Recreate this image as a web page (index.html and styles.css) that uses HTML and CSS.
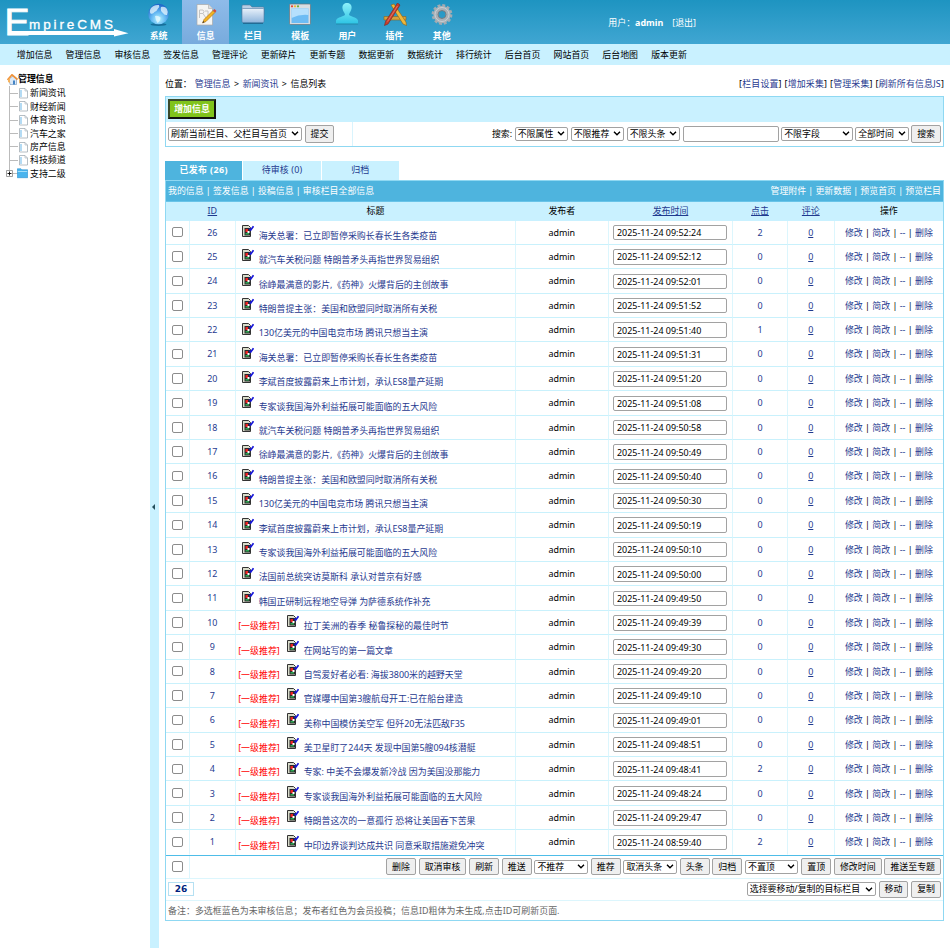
FILE: index.html
```html
<!DOCTYPE html>
<html lang="zh-CN">
<head>
  <meta charset="UTF-8">
  <title>EmpireCMS</title>
  <link rel="stylesheet" href="styles.css">
</head>

<body>
  <header class="top">
    <svg class="logo" width="135" height="44" viewBox="0 0 135 44">
      <text x="4.500" y="35" class="logo-e">E</text>
      <text x="29" y="29" class="logo-text" textLength="84">mpireCMS</text>
      <path d="M8 31H114V29L128.500 33.200L114 36.500V35H8Z" fill="#fff"/>
    </svg>
    <nav class="menu">
      <a>
        <svg width="24" height="24" viewBox="0 0 24 24">
          <defs>
            <radialGradient id="ball" cx=".5" cy=".75" r=".7"><stop offset="0" stop-color="#b5f4ff"/><stop offset=".5" stop-color="#62b6f2"/><stop offset="1" stop-color="#1f68ca"/></radialGradient>
            <linearGradient id="fold" x2="0" y2="1"><stop offset="0" stop-color="#e8f1fa"/><stop offset="1" stop-color="#8fb5dc"/></linearGradient>
            <linearGradient id="man" x2="0" y2="1"><stop offset="0" stop-color="#8df0fa"/><stop offset="1" stop-color="#2cc4e4"/></linearGradient>
          </defs>
          <ellipse cx="11.500" cy="21.500" rx="8" ry="1.500" fill="#176f9b"/>
          <circle cx="11.500" cy="11" r="10.300" fill="url(#ball)"/>
          <path d="M4 5Q7 1.500 12 2Q13 4 11 5.500Q10 8 7.500 9Q6 11.500 3.500 10.500Q2 8 4 5ZM14 4Q18 3 20 6Q21.500 9 20 12Q17 12.500 16 10Q13 8 14 4ZM8 13Q11 12 13.500 14.500Q13.500 18 10.500 20Q8.500 17 8 13Z" fill="#eafaff" opacity=".75"/>
        </svg>
        <b>系统</b>
      </a>
      <a class="on">
        <svg width="24" height="24" viewBox="0 0 24 24">
          <path d="M3 1.500H14.500L18.500 5.500V22H3Z" fill="#f5f5f3" stroke="#a9a9a9" stroke-width=".7"/>
          <path d="M14.500 1.500V5.500H18.500" fill="#ddd" stroke="#aaa" stroke-width=".6"/>
          <path d="M5.500 7H9Q11 8.500 9 10.500H5.500ZM5.500 7V15M9 10.500L12 15M11 8H14V14" fill="none" stroke="#c4c4c4"/>
          <path d="M8.500 20L10 16.500 19 7.500 21 9.500 12 18.500Z" fill="#f3b321" stroke="#a66c11" stroke-width=".6"/>
          <path d="M19 7.500L20.500 6 22.500 8 21 9.500Z" fill="#d4493a"/>
          <path d="M8.500 20L9.300 18 10.500 19.200Z" fill="#333"/>
        </svg>
        <b>信息</b>
      </a>
      <a>
        <svg width="24" height="24" viewBox="0 0 24 24">
          <path d="M1 3Q1 2 2 2H9L11 4H22Q23 4 23 5V12H1Z" fill="#b9cfe5" stroke="#59799a" stroke-width=".6"/>
          <rect x="1" y="5.500" width="22" height="14" rx="1" fill="url(#fold)" stroke="#527aa2" stroke-width=".6"/>
          <path d="M2 20.500H22" stroke="#216c95"/>
        </svg>
        <b>栏目</b>
      </a>
      <a>
        <svg width="24" height="24" viewBox="0 0 24 24">
          <rect x="1.500" y="1" width="21" height="20.500" rx="1" fill="#d8dde2" stroke="#68747d" stroke-width=".7"/>
          <circle cx="4" cy="3.300" r="1.100" fill="#e34430"/><circle cx="7" cy="3.300" r="1.100" fill="#f0b72b"/><circle cx="10" cy="3.300" r="1.100" fill="#67ad35"/>
          <rect x="3.500" y="5.500" width="17" height="14.500" fill="#6dbcf4"/>
          <path d="M3.500 5.500H20.500V12Q12 11 3.500 15Z" fill="#b5e0fd"/>
        </svg>
        <b>模板</b>
      </a>
      <a>
        <svg width="24" height="24" viewBox="0 0 24 24">
          <path d="M12 0C15.500 0 17 2.500 16.500 5.500C16.200 8 14.500 9.500 14 11.500C14 13.500 22 14 23 17.500V21H1V17.500C2 14 10 13.500 10 11.500C9.500 9.500 7.800 8 7.500 5.500C7 2.500 8.500 0 12 0Z" fill="url(#man)"/>
          <path d="M1 21H23" stroke="#2389aa"/>
        </svg>
        <b>用户</b>
      </a>
      <a>
        <svg width="24" height="24" viewBox="0 0 24 24">
          <path d="M1 13.500H23V17H1Z" fill="#d6a13c" stroke="#8d6420" stroke-width=".6"/>
          <path d="M8 2L11 1 23 19 23.500 22.500 20 21Z" fill="#efb73a" stroke="#8c6217" stroke-width=".6"/>
          <path d="M14.500 0L17 2 5 21 1.500 22.500 2.500 18.500Z" fill="#c93e2c" stroke="#7d2319" stroke-width=".6"/>
          <path d="M14.500 3L4.500 18.500" stroke="#ed8c78" stroke-width=".7"/>
        </svg>
        <b>插件</b>
      </a>
      <a>
        <svg width="24" height="24" viewBox="0 0 24 24">
          <circle cx="12" cy="11.500" r="9" fill="none" stroke="#a3abb2" stroke-width="2.800" stroke-dasharray="2.850 1.862"/>
          <circle cx="12" cy="11.500" r="6.200" fill="none" stroke="#a8b0b6" stroke-width="5"/>
          <circle cx="12" cy="11.500" r="4" fill="none" stroke="#737c83" stroke-width="1"/>
          <circle cx="12" cy="11.500" r="7" fill="none" stroke="#c9cfd4" stroke-width="1"/>
        </svg>
        <b>其他</b>
      </a>
    </nav>
    <div class="user">用户：<b>admin</b><span>[退出]</span></div>
  </header>

  <nav class="submenu">
    <a>增加信息</a><a>管理信息</a><a>审核信息</a><a>签发信息</a><a>管理评论</a><a>更新碎片</a><a>更新专题</a><a>数据更新</a><a>数据统计</a><a>排行统计</a><a>后台首页</a><a>网站首页</a><a>后台地图</a><a>版本更新</a>
  </nav>

  <div class="page">
    <aside class="side">
      <div class="root">
        <svg width="11" height="11" viewBox="0 0 11 11"><path d="M2 5L6 2 9.500 5V10.500H3Z" fill="#dbe9f7" stroke="#6f94bd" stroke-width=".6"/><path d="M.5 6L5 .8 10.500 5.500" fill="none" stroke="#f0923a" stroke-width="1.700"/><path d="M1 5.500L3 3.500V9L1 8Z" fill="#f6b25c"/><path d="M6 6.500H8V10.500H6Z" fill="#4384c6"/></svg>
        管理信息
      </div>
      <ul class="tree">
        <li><svg class="file"><use href="#file"/></svg>新闻资讯</li>
        <li><svg class="file"><use href="#file"/></svg>财经新闻</li>
        <li><svg class="file"><use href="#file"/></svg>体育资讯</li>
        <li><svg class="file"><use href="#file"/></svg>汽车之家</li>
        <li><svg class="file"><use href="#file"/></svg>房产信息</li>
        <li><svg class="file"><use href="#file"/></svg>科技频道</li>
        <li class="more">
          <svg class="plus" width="7" height="7" viewBox="0 0 7 7"><path d="M.5.5H6.500V6.500H.5Z" fill="#fff" stroke="#888" stroke-width=".8"/><path d="M1.500 3.500H5.500M3.500 1.500V5.500" stroke="#000" stroke-width=".9"/></svg>
          <svg class="file" viewBox="0 0 11 11"><path d="M.3 .8H4L5 1.800H10.700V9.700H.3Z" fill="#49b4ee" stroke="#2c91cd" stroke-width=".6"/><path d="M.8 3.500H10.200" stroke="#a3def9"/></svg>支持二级
        </li>
      </ul>
    </aside>
    <div class="split"><i></i></div>

    <main class="main">
      <div class="crumb">
        <span class="path">位置：<a>管理信息</a><i>&gt;</i><a>新闻资讯</a><i>&gt;</i>信息列表</span>
        <span class="tools">[<a>栏目设置</a>] [<a>增加采集</a>] [<a>管理采集</a>] [<a>刷新所有信息JS</a>]</span>
      </div>

      <section class="box search">
        <div class="add"><button class="green">增加信息</button></div>
        <div class="search-row">
          <div class="refresh">
            <select class="w134"><option>刷新当前栏目、父栏目与首页</option></select>
            <button>提交</button>
          </div>
          <div class="find">
            搜索:
            <select><option>不限属性</option></select>
            <select><option>不限推荐</option></select>
            <select><option>不限头条</option></select>
            <input type="text" class="key">
            <select class="w71"><option>不限字段</option></select>
            <select><option>全部时间</option></select>
            <button>搜索</button>
          </div>
        </div>
      </section>

      <div class="tabs"><a class="on">已发布 (26)</a><a>待审核 (0)</a><a>归档</a></div>

      <section class="box list">
        <div class="bar">
          <span>我的信息 | 签发信息 | 投稿信息 | 审核栏目全部信息</span>
          <span>管理附件 | 更新数据 | 预览首页 | 预览栏目</span>
        </div>
        <div class="row head">
          <div></div><div><a>ID</a></div><div>标题</div><div>发布者</div><div><a>发布时间</a></div><div><a>点击</a></div><div><a>评论</a></div><div>操作</div>
        </div>
        <div id="rows"></div>
        <div class="acts">
          <div class="all"><input type="checkbox"></div>
          <div class="btns">
            <button>删除</button>
            <button>取消审核</button>
            <button>刷新</button>
            <button>推送</button>
            <select><option>不推荐</option></select>
            <button>推荐</button>
            <select><option>取消头条</option></select>
            <button>头条</button>
            <button>归档</button>
            <select><option>不置顶</option></select>
            <button>置顶</button>
            <button>修改时间</button>
            <button>推送至专题</button>
          </div>
        </div>
        <div class="pager">
          <b>26</b>
          <div class="btns">
            <select class="w129"><option>选择要移动/复制的目标栏目</option></select>
            <button>移动</button>
            <button>复制</button>
          </div>
        </div>
        <div class="note">备注：多选框蓝色为未审核信息；发布者红色为会员投稿；信息ID粗体为未生成,点击ID可刷新页面.</div>
      </section>
    </main>
  </div>

  <svg class="symbols">
    <symbol id="file" viewBox="0 0 11 11"><path d="M1.500 .5H7L9.500 3V10H1.500Z" fill="#fff" stroke="#a3adb5" stroke-width=".8"/><path d="M7 .5V3H9.500" fill="none" stroke="#a3adb5" stroke-width=".6"/><path d="M3 2V9" stroke="#8cc8ee" stroke-width="1.300"/></symbol>
    <symbol id="edit" viewBox="0 0 13 14"><path d="M1.500 1.500H7.500L9.500 3.500V12.500H1.500Z" fill="#d9dccb" stroke="#333" stroke-width="1"/><path d="M3.500 4H9V11.500H3.500Z" fill="#2b2b2b"/><path d="M4.500 5H7V8H4.500Z" fill="#e22"/><path d="M6.500 7H8.500V9H6.500Z" fill="#fff"/><path d="M4.500 9.800H8" stroke="#2fae55" stroke-width="1.500"/><path d="M8.500 4.500L9.800 6L12.500 2.200" fill="none" stroke="#1717d8" stroke-width="1.700"/></symbol>
  </svg>
  <script src="script.js"></script>
</body>
</html>
```
FILE: styles.css
```css
*{
  box-sizing:border-box;
}
body{
  margin:0;
  height:948px;
  overflow:hidden;
  background:#fff;
  color:#000;
  font:8.940px/12px "Noto Sans","Noto Sans CJK SC",sans-serif;
}
a{
  color:#1f3a8f;
}

/* Kopf */
.top{
  height:44px;
  display:flex;
  color:#fff;
  background:linear-gradient(#1e94c1,#40a6d2);
}
.logo{
  flex:none;
}
.logo-e{
  font:37.500px "Liberation Sans",sans-serif;
  fill:#fff;
  stroke:#fff;
  stroke-width:.8px;
}
.logo-text{
  font:13.500px "Liberation Sans",sans-serif;
  fill:#fff;
  stroke:#fff;
  stroke-width:.3px;
}
.menu{
  display:flex;
}
.menu a{
  width:47.200px;
  height:44px;
  padding-top:3px;
  display:flex;
  flex-direction:column;
  align-items:center;
  color:#fff;
}
.menu b{
  margin-top:3px;
}
.menu .on{
  background:linear-gradient(#8fbbe9,#78abdd);
}
.user{
  margin:17px 0 0 143px;
}
.user span{
  margin-left:9px;
}
.submenu{
  height:21px;
  padding:5px 0 0 16.800px;
  display:flex;
  gap:12.800px;
  background:#c9f1ff;
}
.submenu a{
  width:36px;
  white-space:nowrap;
  color:#000;
}

.page{
  height:883px;
  display:flex;
}
.side{
  width:150px;
  padding:7.500px 0 0 7px;
}
.root{
  height:13.500px;
  display:flex;
  align-items:center;
  font-weight:bold;
}
.tree{
  margin:0 0 0 2px;
  padding:.800px 0 0;
  list-style:none;
  background:linear-gradient(#bbb,#bbb) 0 0/1px 87px no-repeat;
}
.tree li{
  height:13.400px;
  padding-left:9px;
  display:flex;
  align-items:center;
  background:linear-gradient(#bbb,#bbb) 0 6px/9px 1px no-repeat;
}
.file{
  width:11px;
  height:11px;
  margin-right:1px;
  flex:none;
}
.plus{
  margin:0 5px 0 -12px;
}
.more .file{
  margin:0 2px 0 -1px;
}
.split{
  width:8.500px;
  display:flex;
  align-items:center;
  background:#c9f1ff;
}
.split i{
  margin-left:2px;
  border:3px solid transparent;
  border-left:0;
  border-right-color:#234f5d;
}

.main{
  width:779px;
  margin-left:6.500px;
}
.crumb{
  height:30.500px;
  padding-top:13px;
  display:flex;
  justify-content:space-between;
}
.path a:first-child{
  margin-left:3px;
}
.path i{
  width:12.200px;
  display:inline-block;
  font-style:normal;
  text-align:center;
}
.tools{
  word-spacing:.400px;
  letter-spacing:.170px;
}
.box{
  border:1px solid #8fd8f2;
}

/* Formularelemente */
button{
  height:17.500px;
  padding:0 5px;
  flex:none;
  border:1px solid #a2a2a2;
  border-radius:2px;
  background:#efefef;
  color:#000;
  font:inherit;
}
select{
  appearance:none;
  width:53.500px;
  height:14px;
  padding:0 2px;
  flex:none;
  border:1px solid #a2a2a2;
  border-radius:2px;
  background:#fff url("data:image/svg+xml,%3Csvg xmlns='http://www.w3.org/2000/svg' width='8' height='5'%3E%3Cpath d='M1 .8L4 3.800L7 .8' fill='none' stroke='%23000' stroke-width='1.400'/%3E%3C/svg%3E") right 2px center no-repeat;
  color:#000;
  font:inherit;
  line-height:12px;
}
input{
  height:15.500px;
  margin:0;
  padding:0 2px;
  border:1px solid #a2a2a2;
  border-radius:2px;
  font:inherit;
}
[type="checkbox"]{
  appearance:none;
  width:10.500px;
  height:10.500px;
  padding:0;
  border-color:#8c8c8c;
  background:#fff;
}
.w134{width:134px;}
.w71{width:71.500px;}
.w129{width:129px;}
.key{width:96px;}

.search{
  height:51.500px;
}
.add{
  height:25px;
  padding:2.500px 2px;
  background:#c9f1ff;
}
.green{
  height:20px;
  padding:0 4.200px;
  border:2px solid;
  border-color:#3a4a2c #111 #111 #3a4a2c;
  border-radius:0;
  background:#80c31c;
  color:#fff;
  font-weight:bold;
}
.search-row{
  height:24.500px;
  display:flex;
}
.refresh,.find{
  display:flex;
  align-items:center;
  gap:2.500px;
}
.refresh{
  width:187px;
  padding-left:2px;
  border-right:1px solid #d9f4fd;
}
.find{
  flex:1;
  padding-right:2px;
  justify-content:flex-end;
}

.tabs{
  height:18.500px;
  margin-top:14px;
  display:flex;
  gap:1px;
}
.tabs a{
  width:77.300px;
  height:18.500px;
  line-height:18px;
  text-align:center;
  background:#c9f1ff;
}
.tabs .on{
  background:#4eb4de;
  color:#fff;
  font-weight:bold;
  letter-spacing:.400px;
}
.tabs a + a{
  letter-spacing:.150px;
}

/* Liste */
.bar{
  height:21px;
  padding:0 2px;
  display:flex;
  justify-content:space-between;
  align-items:center;
  background:#4eb4de;
  border-bottom:1px solid #69c4e8;
  color:#fff;
  word-spacing:-.150px;
}
.row{
  height:24.400px;
  display:grid;
  grid-template-columns:23.500px 46.700px 279.600px 93px 124.400px 54.600px 47px 1fr;
}
.row > div{
  display:flex;
  align-items:center;
  justify-content:center;
  border-right:1px solid #dcf6fd;
  border-bottom:1px solid #c9f1fc;
  white-space:pre;
}
.row > div:last-child{
  border-right:0;
}
.row:last-child > div{
  border-bottom-color:transparent;
}
.row > div + div{
  padding-top:.700px;
}
.row .title{
  padding-left:2px;
  justify-content:flex-start;
}
.title span,.title a{
  margin-top:6.700px;
}
.title span{
  width:46px;
  color:#f00;
}
.title svg{
  width:13px;
  height:14px;
  margin:0 5px 3px 2.500px;
}
.title span + svg{
  margin-left:1.500px;
}
.row input[type="text"]{
  width:114px;
  padding-left:2.500px;
}
.cm{
  text-decoration:underline;
}
.head{
  height:19px;
  background:#c9f1ff;
}
.row.head > div{
  padding-top:0;
  border-color:transparent;
}
.head a{
  text-decoration:underline;
}
.acts{
  height:24px;
  display:flex;
  border-top:1px solid #4ebde8;
  border-bottom:1px solid #dcf6fd;
}
.all{
  width:23.500px;
  display:flex;
  align-items:center;
  justify-content:center;
  border-right:1px solid #dcf6fd;
}
.btns{
  flex:1;
  padding-right:2px;
  display:flex;
  align-items:center;
  justify-content:flex-end;
  gap:2.800px;
}
.pager{
  height:22.500px;
  padding-left:2px;
  display:flex;
  align-items:center;
  border-bottom:1px solid #dcf6fd;
}
.pager b{
  width:26px;
  height:14px;
  border:1px solid #b5e0f2;
  color:#001f7e;
  text-align:center;
  font:bold 9px/13px "DejaVu Sans",sans-serif;
}
.note{
  height:18.500px;
  padding:0 2px;
  line-height:19px;
  letter-spacing:.040px;
  color:#666;
}
.symbols{
  display:none;
}
```
FILE: script.js
```js
// [ID, Titel, Zeit, Klicks]
var list = [
  [26, '海关总署：已立即暂停采购长春长生各类疫苗', '09:52:24', 2],
  [25, '就汽车关税问题 特朗普矛头再指世界贸易组织', '09:52:12', 0],
  [24, '徐峥最满意的影片,《药神》火爆背后的主创故事', '09:52:01', 0],
  [23, '特朗普提主张：美国和欧盟同时取消所有关税', '09:51:52', 0],
  [22, '130亿美元的中国电竞市场 腾讯只想当主演', '09:51:40', 1],
  [21, '海关总署：已立即暂停采购长春长生各类疫苗', '09:51:31', 0],
  [20, '李斌首度披露蔚来上市计划，承认ES8量产延期', '09:51:20', 0],
  [19, '专家谈我国海外利益拓展可能面临的五大风险', '09:51:08', 0],
  [18, '就汽车关税问题 特朗普矛头再指世界贸易组织', '09:50:58', 0],
  [17, '徐峥最满意的影片,《药神》火爆背后的主创故事', '09:50:49', 0],
  [16, '特朗普提主张：美国和欧盟同时取消所有关税', '09:50:40', 0],
  [15, '130亿美元的中国电竞市场 腾讯只想当主演', '09:50:30', 0],
  [14, '李斌首度披露蔚来上市计划，承认ES8量产延期', '09:50:19', 0],
  [13, '专家谈我国海外利益拓展可能面临的五大风险', '09:50:10', 0],
  [12, '法国前总统突访莫斯科 承认对普京有好感', '09:50:00', 0],
  [11, '韩国正研制远程地空导弹 为萨德系统作补充', '09:49:50', 0],
  [10, '拉丁美洲的春季 秘鲁探秘的最佳时节', '09:49:39', 0],
  [9, '在网站写的第一篇文章', '09:49:30', 0],
  [8, '自驾爱好者必看: 海拔3800米的越野天堂', '09:49:20', 0],
  [7, '官媒曝中国第3艘航母开工:已在船台建造', '09:49:10', 0],
  [6, '美称中国模仿美空军 但歼20无法匹敌F35', '09:49:01', 0],
  [5, '美卫星盯了244天 发现中国第5艘094核潜艇', '09:48:51', 0],
  [4, '专家: 中美不会爆发新冷战 因为美国没那能力', '09:48:41', 2],
  [3, '专家谈我国海外利益拓展可能面临的五大风险', '09:48:24', 0],
  [2, '特朗普这次的一意孤行 恐将让美国吞下苦果', '09:29:47', 0],
  [1, '中印边界谈判达成共识 同意采取措施避免冲突', '08:59:40', 2]
];

document.getElementById('rows').innerHTML = list.map(function (r) {
  return '<div class="row">' +
    '<div><input type="checkbox"></div>' +
    '<div><a>' + r[0] + '</a></div>' +
    '<div class="title">' + (r[0] <= 10 ? '<span>[一级推荐]</span>' : '') +
      '<svg><use href="#edit"/></svg><a>' + r[1] + '</a></div>' +
    '<div>admin</div>' +
    '<div><input type="text" value="2025-11-24 ' + r[2] + '"></div>' +
    '<div><a>' + r[3] + '</a></div>' +
    '<div><a class="cm">0</a></div>' +
    '<div><a>修改</a> | <a>简改</a> | <a>--</a> | <a>删除</a></div>' +
    '</div>';
}).join('');
```
